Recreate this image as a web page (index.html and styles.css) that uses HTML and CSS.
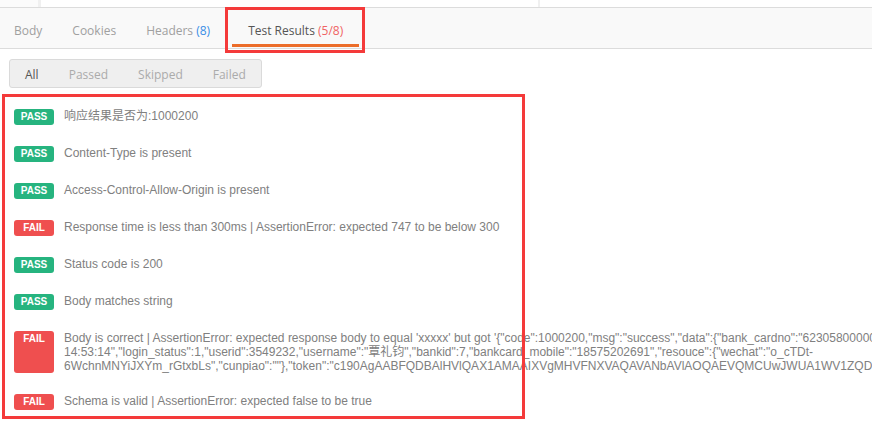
FILE: index.html
```html
<!DOCTYPE html>
<html lang="en">
<head>
<meta charset="utf-8">
<title>Test Results</title>
<link rel="stylesheet" href="styles.css">
</head>
<body>
<div class="page">
  <div class="topstrip">
    <div class="strip-a"></div>
    <div class="strip-b"></div>
  </div>

  <div class="tabbar">
    <div class="tab tab-first">Body</div>
    <div class="tab">Cookies</div>
    <div class="tab">Headers <span class="count-blue">(8)</span></div>
    <div class="tab tab-active">Test Results <span class="count-red">(5/8)</span></div>
  </div>

  <div class="filters">
    <div class="filter filter-on">All</div>
    <div class="filter">Passed</div>
    <div class="filter">Skipped</div>
    <div class="filter">Failed</div>
  </div>

  <div class="results">
    <div class="row">
      <span class="badge pass">PASS</span>
      <div class="msg">响应结果是否为:1000200</div>
    </div>
    <div class="row">
      <span class="badge pass">PASS</span>
      <div class="msg">Content-Type is present</div>
    </div>
    <div class="row">
      <span class="badge pass">PASS</span>
      <div class="msg">Access-Control-Allow-Origin is present</div>
    </div>
    <div class="row">
      <span class="badge fail">FAIL</span>
      <div class="msg">Response time is less than 300ms | AssertionError: expected 747 to be below 300</div>
    </div>
    <div class="row">
      <span class="badge pass">PASS</span>
      <div class="msg">Status code is 200</div>
    </div>
    <div class="row">
      <span class="badge pass">PASS</span>
      <div class="msg">Body matches string</div>
    </div>
    <div class="row">
      <span class="badge fail">FAIL</span>
      <div class="msg">Body is correct | AssertionError: expected response body to equal 'xxxxx' but got '{"code":1000200,"msg":"success","data":{"bank_cardno":"6230580000012345678","create_time":"2018-09-12<br>14:53:14","login_status":1,"userid":3549232,"username":"覃礼钧","bankid":7,"bankcard_mobile":"18575202691","resouce":{"wechat":"o_cTDt-<br>6WchnMNYiJXYm_rGtxbLs","cunpiao":""},"token":"c190AgAABFQDBAlHVlQAX1AMAAIXVgMHVFNXVAQAVANbAVlAOQAEVQMCUwJWUA1WV1ZQDVAAUQ"}}'</div>
    </div>
    <div class="row">
      <span class="badge fail">FAIL</span>
      <div class="msg">Schema is valid | AssertionError: expected false to be true</div>
    </div>
  </div>

  <div class="mark mark-tab"></div>
  <div class="mark mark-results"></div>
</div>
</body>
</html>
```

FILE: styles.css
```css
html, body {
  margin: 0;
  padding: 0;
  background: #ffffff;
  overflow: hidden;
}

.page {
  position: relative;
  width: 872px;
  height: 425px;
  overflow: hidden;
}

.topstrip {
  display: flex;
  height: 7px;
}

.strip-a {
  width: 38px;
  background: #fbfbfb;
  border-right: 3px solid #f0f0f0;
}

.strip-b {
  width: 497px;
  border-right: 2px solid #f0f0f0;
}

.tabbar {
  display: flex;
  align-items: flex-start;
  height: 40px;
  background: #f9f9f9;
  border-top: 1px solid #dcdcdc;
  border-bottom: 1px solid #dcdcdc;
  font-family: "Open Sans", "Liberation Sans", sans-serif;
  font-size: 12px;
  line-height: 16px;
}

.tab {
  box-sizing: border-box;
  height: 39px;
  padding: 15px 15px 0;
  color: #a0a0a0;
  white-space: nowrap;
  border-bottom: 3px solid transparent;
}

.tab-first {
  padding-left: 14px;
}

.tab-active {
  margin-left: 7px;
  padding: 15px 16px 0;
  color: #555555;
  border-bottom-color: #ec6d2a;
}

.count-blue {
  color: #3a8ee6;
}

.count-red {
  color: #f06464;
}

.filters {
  display: inline-flex;
  margin: 10px 0 0 9px;
  background: #efefef;
  border: 1px solid #dadada;
  border-radius: 3px;
  font-family: "Open Sans", "Liberation Sans", sans-serif;
  font-size: 12px;
  line-height: 16px;
}

.filter {
  padding: 7px 15px 4px;
  color: #ababab;
}

.filter-on {
  color: #555555;
}

.results {
  padding: 21px 0 0 14px;
  display: flex;
  flex-direction: column;
  gap: 21px;
  font-family: "Liberation Sans", Arial, "Noto Sans CJK SC", sans-serif;
  font-size: 12px;
  line-height: 14px;
  color: #808080;
}

.row {
  display: flex;
  align-items: stretch;
  gap: 10px;
  min-height: 16px;
}

.badge {
  flex: none;
  width: 40px;
  min-height: 16px;
  border-radius: 3px;
  color: #ffffff;
  font-family: "Liberation Sans", Arial, sans-serif;
  font-weight: bold;
  font-size: 10px;
  line-height: 16px;
  text-align: center;
}

.pass {
  background: #26b47f;
}

.fail {
  background: #ef4f4f;
}

.msg {
  white-space: nowrap;
}

.mark {
  position: absolute;
  box-sizing: border-box;
  border: 3px solid #f43a3a;
  pointer-events: none;
}

.mark-tab {
  left: 225px;
  top: 7px;
  width: 140px;
  height: 46px;
}

.mark-results {
  left: 2px;
  top: 94px;
  width: 523px;
  height: 325px;
}
```
